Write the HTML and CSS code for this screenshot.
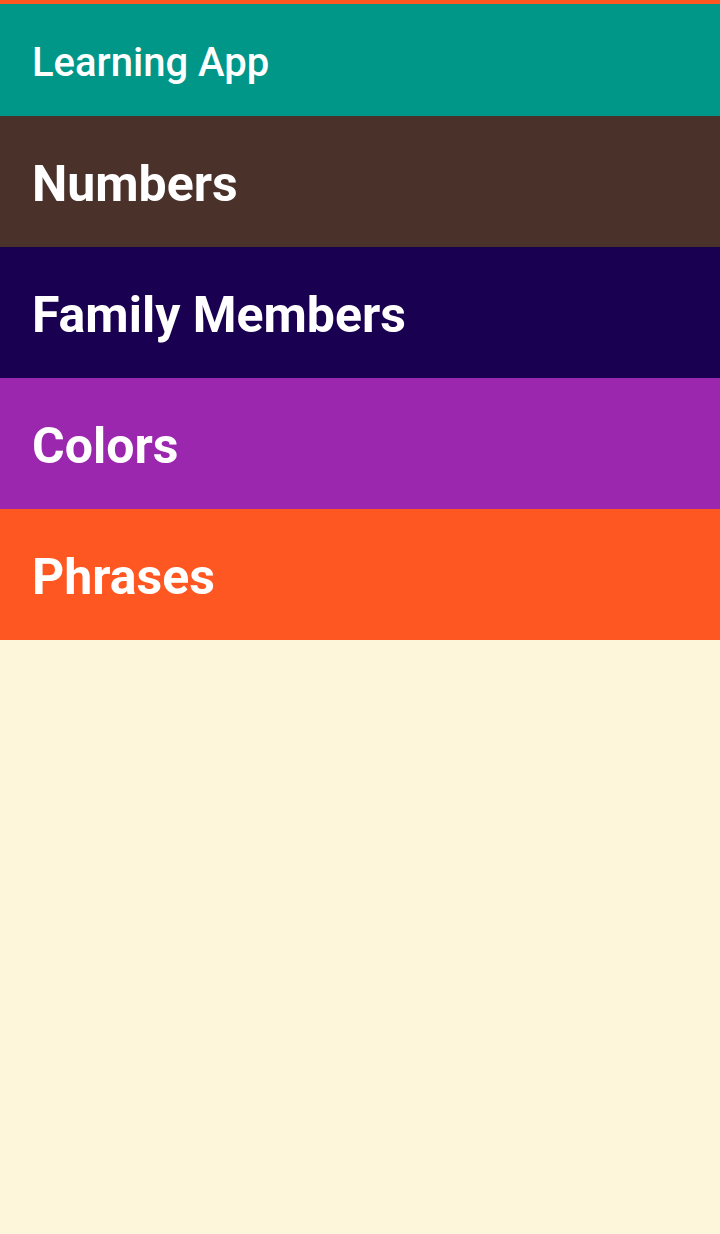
FILE: index.html
```html
<!DOCTYPE html>
<html>
<head>
<meta charset="utf-8">
<link rel="stylesheet" href="styles.css">
</head>
<body>
<div class="status"></div>
<header class="toolbar"><span class="title">Learning App</span></header>
<main class="list">
  <div class="item numbers">Numbers</div>
  <div class="item family">Family Members</div>
  <div class="item colors">Colors</div>
  <div class="item phrases">Phrases</div>
</main>
</body>
</html>
```
FILE: styles.css
```css
html, body {
  margin: 0;
  padding: 0;
}
body {
  width: 720px;
  height: 1234px;
  background: #FEF6DA;
  font-family: Roboto, "Noto Sans", sans-serif;
  color: #ffffff;
  display: flex;
  flex-direction: column;
}
.status {
  height: 4px;
  background: #FF5722;
}
.toolbar {
  height: 112px;
  box-sizing: border-box;
  background: #009688;
  display: flex;
  align-items: center;
  padding-left: 32px;
  padding-top: 4px;
}
.title {
  font-size: 40px;
  font-weight: 500;
}
.list {
  display: flex;
  flex-direction: column;
}
.item {
  height: 131px;
  box-sizing: border-box;
  display: flex;
  align-items: center;
  padding-left: 32px;
  padding-top: 4px;
  font-size: 50px;
  font-weight: 700;
}
.numbers { background: #4A312A; }
.family { background: #1A0050; }
.colors { background: #9A27AE; }
.phrases { background: #FF5722; }
```
